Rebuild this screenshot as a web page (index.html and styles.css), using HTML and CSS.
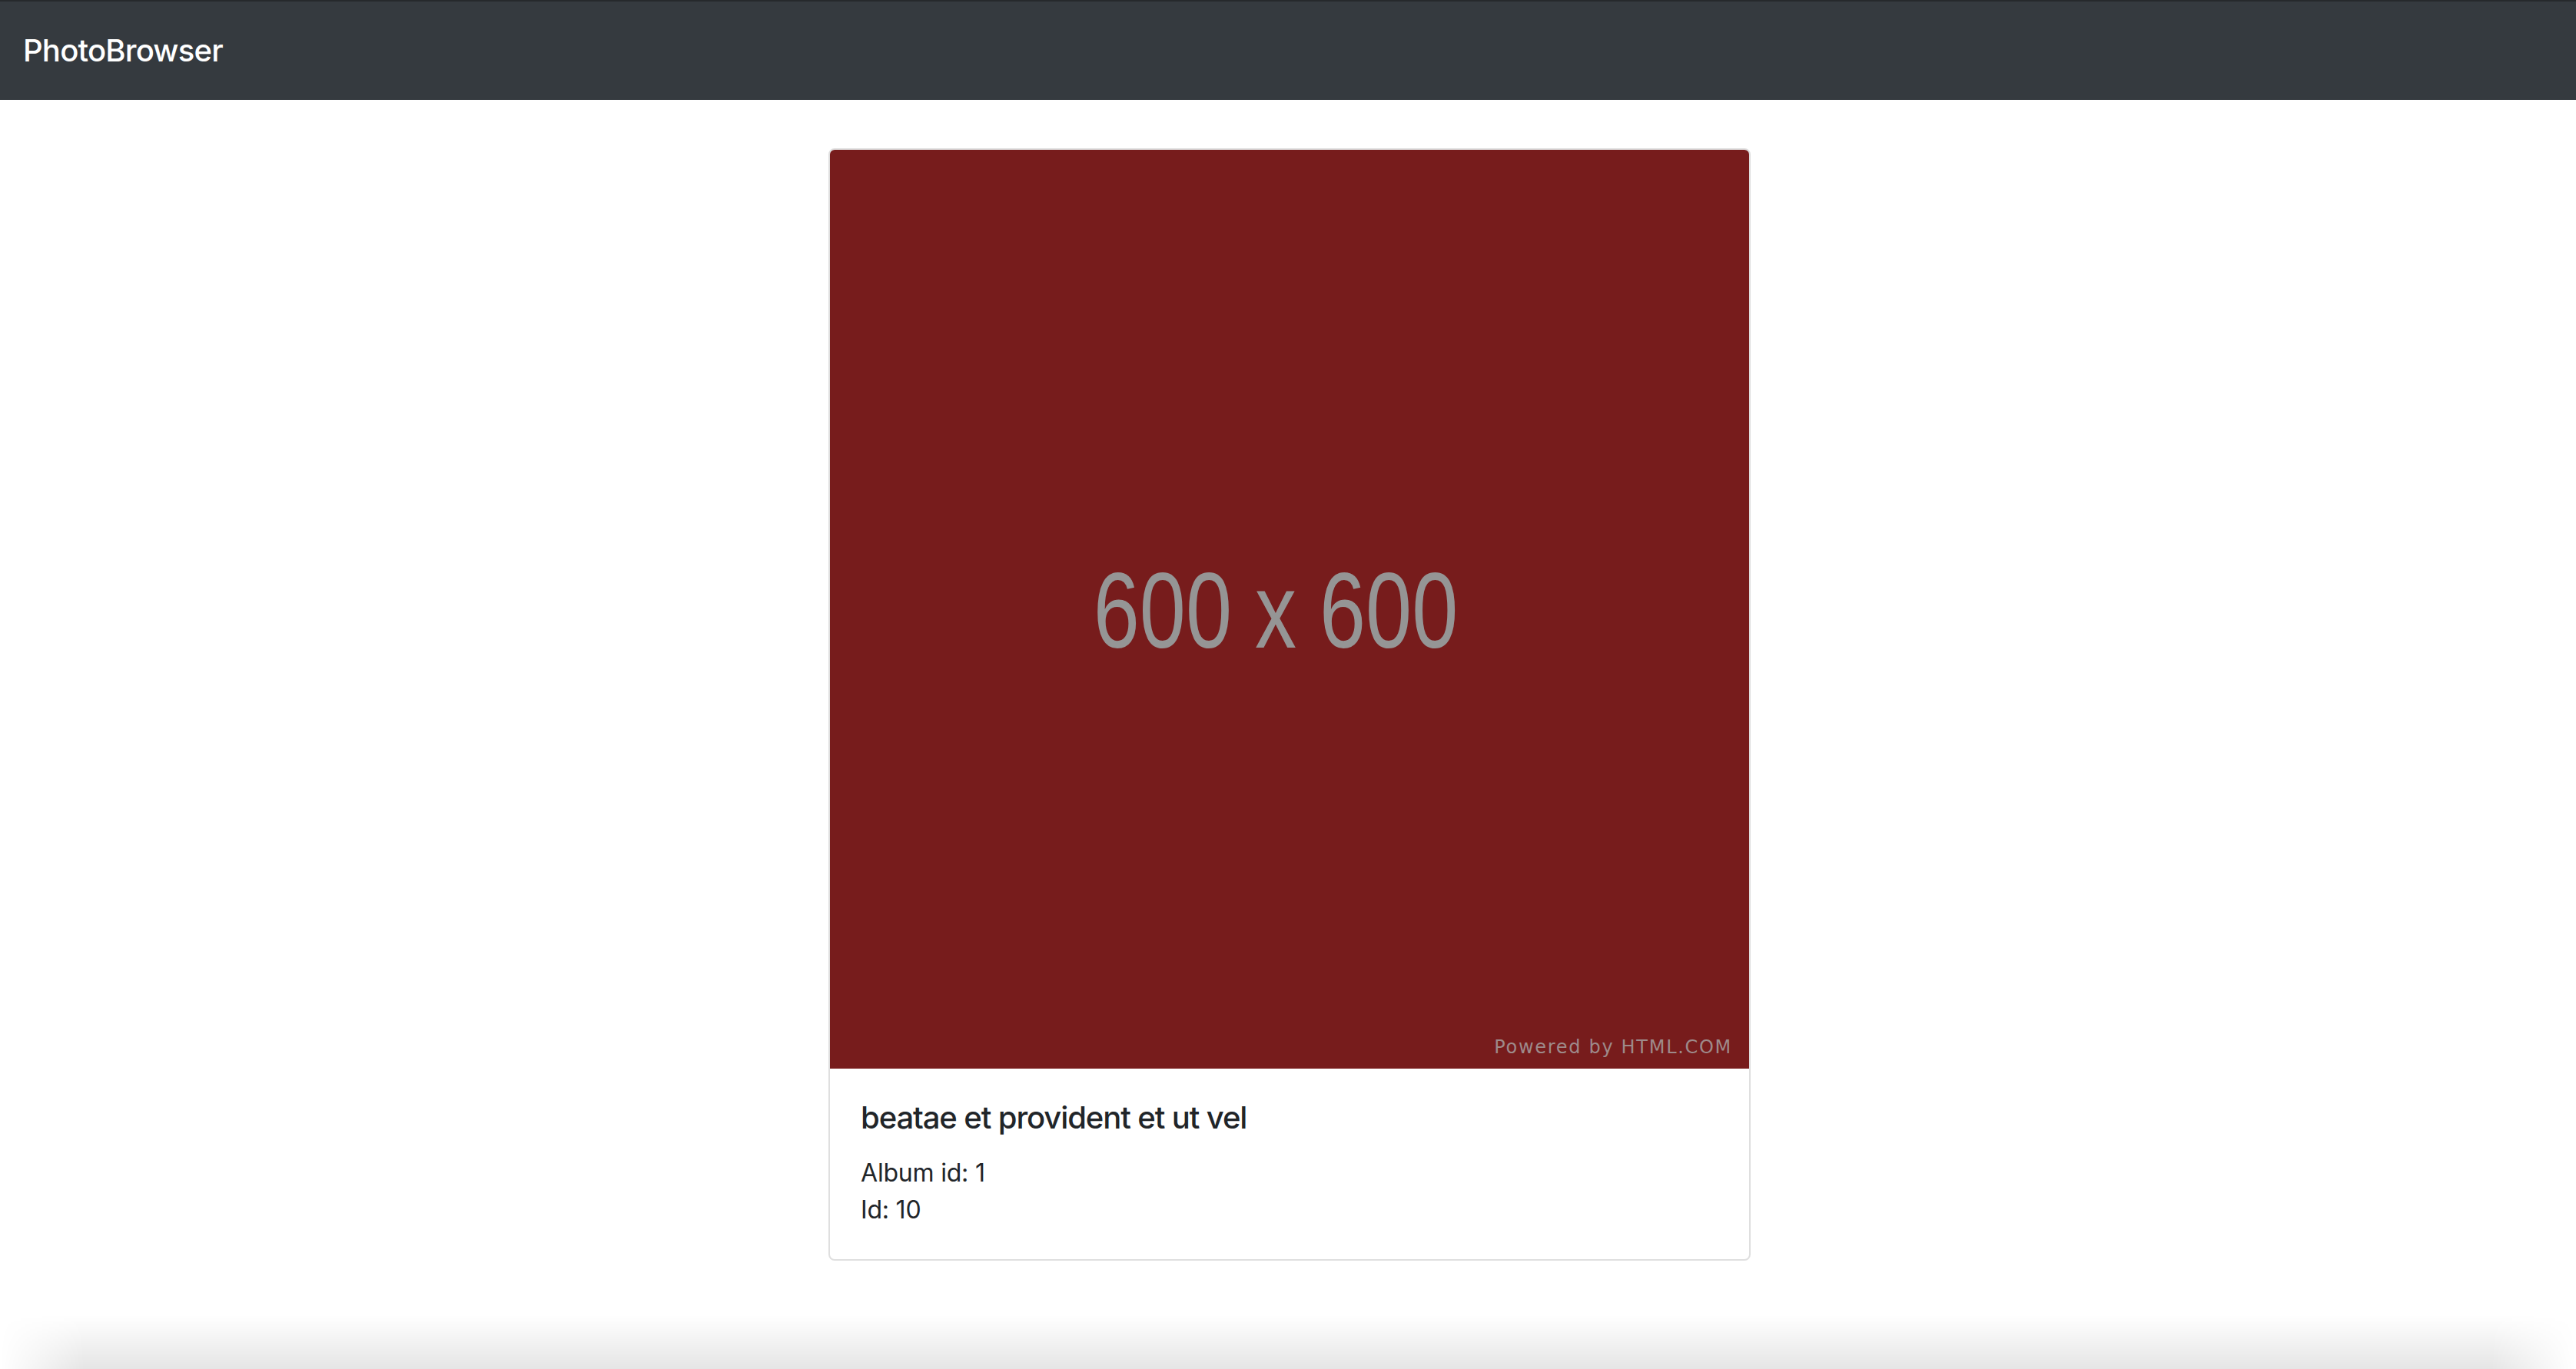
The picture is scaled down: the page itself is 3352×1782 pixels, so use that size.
FILE: index.html
```html
<!DOCTYPE html>
<html lang="en">
<head>
<meta charset="utf-8">
<title>PhotoBrowser</title>
<link rel="stylesheet" href="styles.css">
</head>
<body>
<nav class="navbar">
  <a class="brand" href="#">PhotoBrowser</a>
</nav>
<main class="content">
  <div class="card">
    <div class="photo">
      <span class="photo-size">600 x 600</span>
      <span class="photo-credit">Powered by HTML.COM</span>
    </div>
    <div class="card-body">
      <h5 class="card-title">beatae et provident et ut vel</h5>
      <p class="card-text">Album id: 1</p>
      <p class="card-text">Id: 10</p>
    </div>
  </div>
</main>
<div class="window-shadow"></div>
</body>
</html>
```
FILE: styles.css
```css
* { box-sizing: border-box; }

html, body {
  margin: 0;
  padding: 0;
  background: #ffffff;
}

body {
  font-family: Inter, "Noto Sans", "Liberation Sans", sans-serif;
  font-size: 32px;
  line-height: 1.5;
  color: #212529;
  min-height: 1782px;
}

.navbar {
  height: 130px;
  background: #353a3f;
  border-top: 2px solid #26292c;
  display: flex;
  align-items: center;
  padding: 0 30px;
}

.brand {
  color: #ffffff;
  text-decoration: none;
  font-size: 40px;
  line-height: 60px;
  font-weight: 500;
  letter-spacing: -0.8px;
}

.content {
  display: flex;
  justify-content: center;
  padding-top: 63px;
  padding-left: 4px;
}

.card {
  width: 1200px;
  border: 2px solid #dfdfdf;
  border-radius: 8px;
  overflow: hidden;
  background: #fff;
}

.photo {
  position: relative;
  height: 1196px;
  background: #771c1c;
  display: flex;
  align-items: center;
  justify-content: center;
  padding-right: 36px;
}

.photo-size {
  font-family: "Liberation Sans", Arial, sans-serif;
  font-size: 108px;
  line-height: 1;
  color: #959595;
  transform: scaleY(1.28);
  margin-top: 6px;
}

.photo-credit {
  position: absolute;
  right: 22px;
  bottom: 16px;
  font-family: "DejaVu Sans", Verdana, sans-serif;
  font-size: 24px;
  line-height: 1;
  letter-spacing: 1.7px;
  color: #9e8a8a;
}

.card-body {
  padding: 40px;
}

.card-title {
  margin: 0 0 24px;
  font-size: 40px;
  line-height: 1.2;
  font-weight: 500;
  letter-spacing: -1.1px;
}

.card-text {
  margin: 0;
  font-size: 32px;
  line-height: 48px;
  letter-spacing: -0.2px;
}

.window-shadow {
  position: fixed;
  left: 0;
  right: 0;
  bottom: 0;
  height: 70px;
  background: linear-gradient(to bottom, rgba(0,0,0,0), rgba(0,0,0,0.1));
  -webkit-mask-image: linear-gradient(to right, transparent 0, #000 110px, #000 calc(100% - 110px), transparent 100%);
  mask-image: linear-gradient(to right, transparent 0, #000 110px, #000 calc(100% - 110px), transparent 100%);
  pointer-events: none;
}
```
